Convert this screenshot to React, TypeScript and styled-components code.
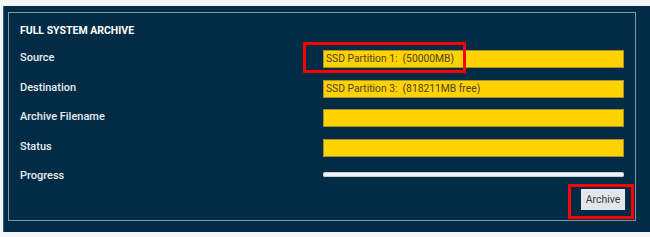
import React from "react";
import styled, { createGlobalStyle } from "styled-components";

const GlobalStyle = createGlobalStyle`
  html, body {
    margin: 0;
    padding: 0;
    background: #f4f6f8;
  }
  body {
    font-family: Roboto, "Liberation Sans", Arial, sans-serif;
  }
`;

const fields = [
  { label: "Source", value: "SSD Partition 1:\u00a0\u00a0(50000MB)", highlight: true },
  { label: "Destination", value: "SSD Partition 3:\u00a0\u00a0(818211MB free)" },
  { label: "Archive Filename", value: "" },
  { label: "Status", value: "" },
];

export default function App() {
  return (
    <>
      <GlobalStyle />
      <Outer>
        <Panel>
          <Title>FULL SYSTEM ARCHIVE</Title>
          {fields.map((f) => (
            <Row key={f.label}>
              <Label>{f.label}</Label>
              <FieldWrap>
                <Field>{f.value}</Field>
                {f.highlight && <SourceMark />}
              </FieldWrap>
            </Row>
          ))}
          <Row>
            <Label>Progress</Label>
            <FieldWrap>
              <ProgressBar />
            </FieldWrap>
          </Row>
          <ButtonRow>
            <ButtonWrap>
              <ArchiveButton>Archive</ArchiveButton>
              <ButtonMark />
            </ButtonWrap>
          </ButtonRow>
        </Panel>
      </Outer>
    </>
  );
}

const Outer = styled.div`
  margin: 6px 0 0 3px;
  width: 647px;
  height: 226px;
  box-sizing: border-box;
  background: #022c46;
  border-left: 1px solid #3d5a70;
  padding: 6px 14px 0 4px;
`;

const Panel = styled.div`
  box-sizing: border-box;
  width: 628px;
  height: 209px;
  border: 1px solid #8596a4;
  padding: 11px 10px 0 11px;
`;

const Title = styled.div`
  color: #ffffff;
  font-size: 10.5px;
  font-weight: 700;
  line-height: 14px;
  margin-bottom: 12px;
`;

const Row = styled.div`
  display: flex;
  align-items: flex-start;
  height: 18px;
  margin-bottom: 11.5px;
`;

const Label = styled.div`
  width: 303px;
  flex: none;
  color: #e9edf0;
  font-size: 11px;
  font-weight: 500;
  line-height: 14px;
  padding-top: 1px;
`;

const FieldWrap = styled.div`
  position: relative;
  width: 301px;
  height: 100%;
`;

const Field = styled.div`
  box-sizing: border-box;
  height: 18px;
  background: #ffd200;
  border: 1px solid #a8912a;
  color: #4b4220;
  font-size: 10.3px;
  line-height: 16px;
  padding-left: 2px;
  white-space: pre;
`;

const SourceMark = styled.div`
  position: absolute;
  left: -20px;
  top: -8px;
  width: 157px;
  height: 25px;
  border: 3px solid #ff0000;
`;

const ProgressBar = styled.div`
  margin-top: 3.5px;
  height: 5px;
  border-radius: 3px;
  background: #f2f4f5;
  box-shadow: inset 0 0 0 1px #c9ced2;
`;

const ButtonRow = styled.div`
  display: flex;
  justify-content: flex-end;
  margin-top: -9px;
`;

const ButtonWrap = styled.div`
  position: relative;
`;

const ArchiveButton = styled.button`
  box-sizing: border-box;
  width: 44px;
  height: 21px;
  padding: 0;
  border: none;
  background: #e3e6e9;
  color: #3a3a3a;
  font-family: Roboto, "Liberation Sans", Arial, sans-serif;
  font-size: 10.5px;
  display: block;
`;

const ButtonMark = styled.div`
  position: absolute;
  left: -13px;
  top: -5px;
  width: 60px;
  height: 29px;
  border: 3px solid #ff0000;
`;
